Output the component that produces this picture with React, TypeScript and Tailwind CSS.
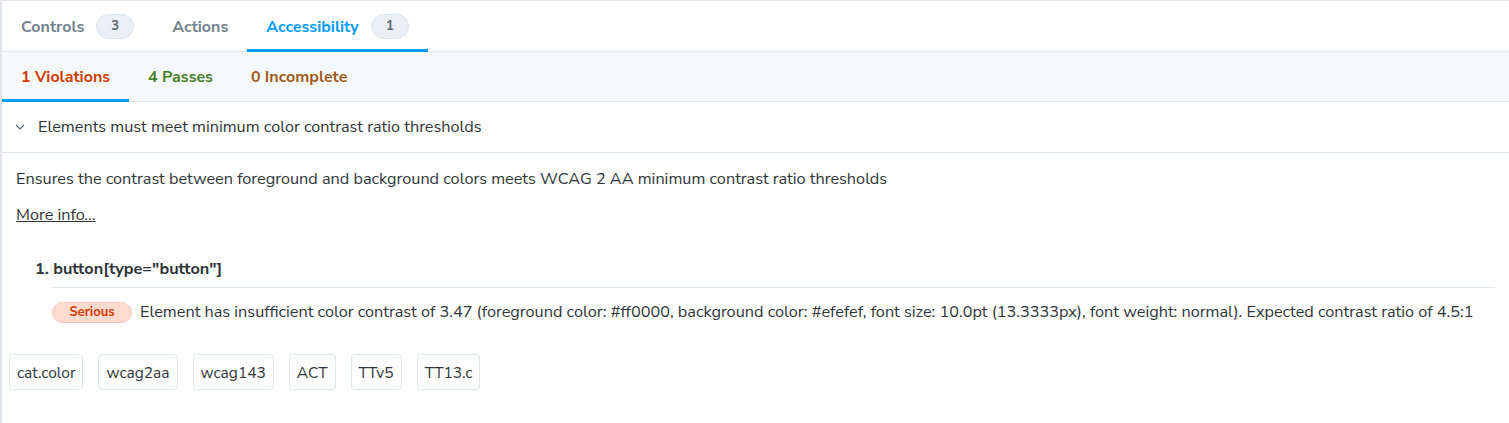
import React from "react";

const tags = ["cat.color", "wcag2aa", "wcag143", "ACT", "TTv5", "TT13.c"];

function Badge({ n }: { n: number }) {
    return (
        <span className="ml-3 inline-flex h-[25px] min-w-[38px] items-center justify-center rounded-full border border-[#dde5ec] bg-[#e9eff5] px-3 text-[13px] font-bold text-[#5c6870]">
            {n}
        </span>
    );
}

export default function App() {
    return (
        <div
            className="h-[423px] w-full border-l-2 border-t border-[#e1e5e9] bg-white text-[#2e3438]"
            style={{ fontFamily: '"Nunito Sans", Lato, "Open Sans", sans-serif' }}
        >
            {/* top tabs */}
            <div className="flex h-[51px] border-b border-[#e1e6ea]">
                <button className="flex items-center px-[19px] pt-[1px] text-[16px] font-bold text-[#73828c]">
                    Controls
                    <Badge n={3} />
                </button>
                <button className="flex items-center px-[19px] pt-[1px] text-[16px] font-bold text-[#73828c]">
                    Actions
                </button>
                <button className="relative flex items-center px-[19px] pt-[1px] text-[16px] font-bold text-[#029cfd]">
                    Accessibility
                    <Badge n={1} />
                    <span className="absolute bottom-[-1px] left-0 right-0 h-[3px] bg-[#029cfd]" />
                </button>
            </div>

            {/* result tabs */}
            <div className="flex h-[50px] border-b border-[#dde3e8] bg-[#f6f9fc]">
                <button className="relative flex items-center px-[19px] text-[16px] font-bold text-[#d43900]">
                    1 Violations
                    <span className="absolute bottom-[-1px] left-0 right-0 h-[3px] bg-[#029cfd]" />
                </button>
                <button className="flex items-center px-[19px] text-[16px] font-bold text-[#448028]">
                    4 Passes
                </button>
                <button className="flex items-center px-[19px] text-[16px] font-bold text-[#a15c20]">
                    0 Incomplete
                </button>
            </div>

            {/* rule header */}
            <div className="flex h-[51px] items-center border-b border-[#e1e6ea] pl-[13px] text-[16.25px]">
                <svg width="10" height="10" viewBox="0 0 10 10" className="mr-[13px] text-[#5c6870]">
                    <path d="M1 3l4 4 4-4" fill="none" stroke="currentColor" strokeWidth="1.1" />
                </svg>
                Elements must meet minimum color contrast ratio thresholds
            </div>

            {/* rule body */}
            <div className="px-[14px] pt-[15px] text-[16.25px]">
                <p className="leading-[22px]">
                    Ensures the contrast between foreground and background colors meets WCAG 2 AA minimum contrast ratio thresholds
                </p>
                <a className="mt-[14px] inline-block leading-[22px] underline">More info...</a>

                <div className="mt-[31px] pl-[19px]">
                    <div className="text-[16.25px] font-bold leading-[22px]">1. button[type="button"]</div>
                    <div className="ml-[17px] mt-[7px] border-t border-[#e1e6ea] pt-[13px]">
                        <div className="flex items-center">
                            <span className="mr-2 inline-flex h-[21px] w-[80px] items-center justify-center rounded-full border border-[#fcc9bd] bg-[#fedacf] text-[13px] font-bold text-[#d43900]">
                                Serious
                            </span>
                            <span className="leading-[22px]">
                                Element has insufficient color contrast of 3.47 (foreground color: #ff0000, background color: #efefef, font size: 10.0pt (13.3333px), font weight: normal). Expected contrast ratio of 4.5:1
                            </span>
                        </div>
                    </div>
                </div>
            </div>

            <div className="mt-[31px] flex gap-[15px] pl-[7px]">
                {tags.map((t) => (
                    <span
                        key={t}
                        className="inline-flex h-[36px] items-center rounded-[4px] border border-[#dfe4e8] px-[7px] text-[15.5px]"
                    >
                        {t}
                    </span>
                ))}
            </div>
        </div>
    );
}
